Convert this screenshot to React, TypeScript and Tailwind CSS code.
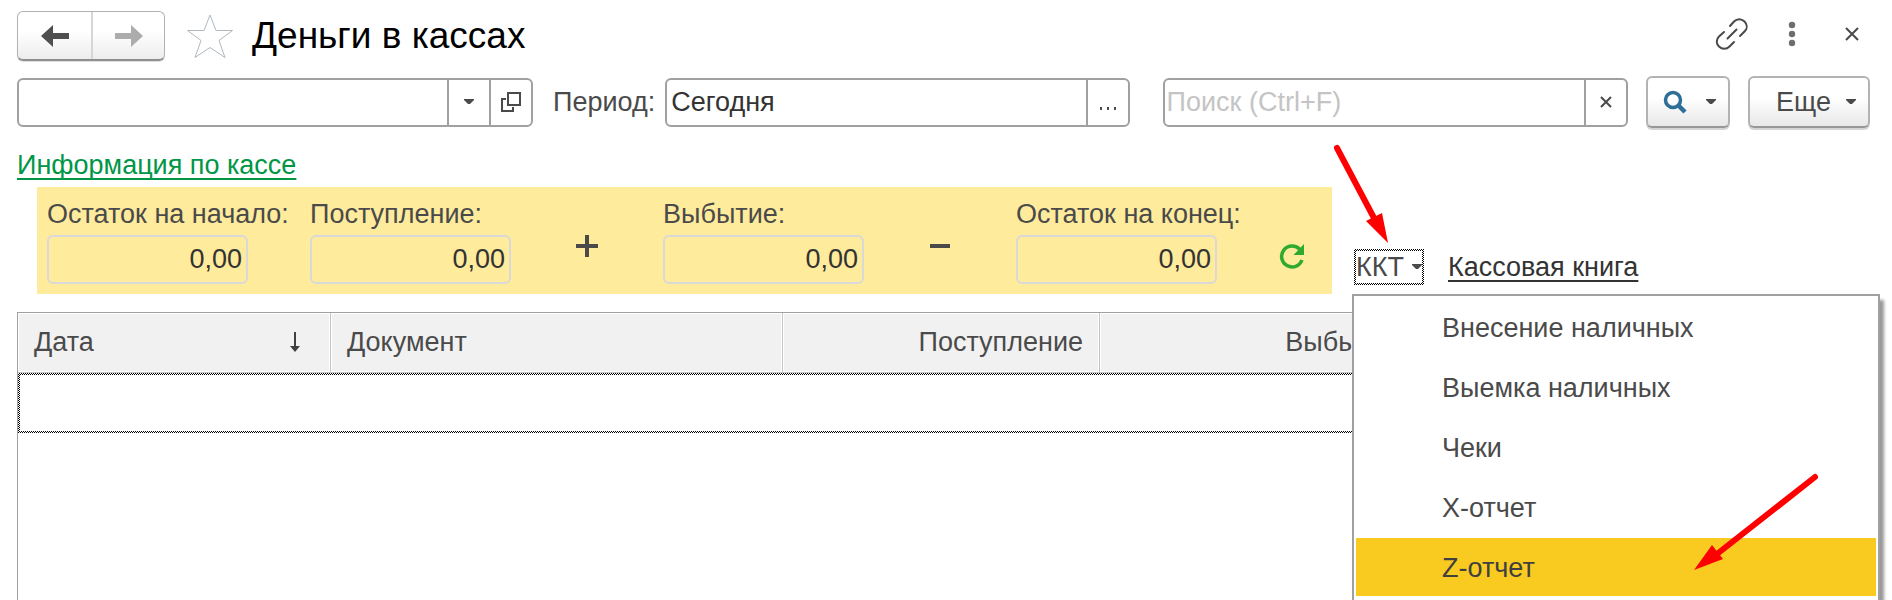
import type { ReactNode } from 'react'

const menuItems = ['Внесение наличных', 'Выемка наличных', 'Чеки', 'X-отчет', 'Z-отчет']
const activeItem = 'Z-отчет'

const checker = 'bg-[repeating-conic-gradient(#000_0_25%,#fff_0_50%)] bg-[length:2px_2px]'

function Caret() {
  return (
    <svg width="10" height="6" viewBox="0 0 10 6" className="shrink-0" fill="#4a4a4a">
      <path d="M0 0h10v1L6 5H4L0 1z" />
    </svg>
  )
}

function Cross() {
  return (
    <svg width="16" height="16" viewBox="0 0 16 16" stroke="#4a4a4a" strokeWidth="2">
      <path d="M2 2l12 12M14 2L2 14" />
    </svg>
  )
}

function Amount({ id, label }: { id: string; label: string }) {
  return (
    <div className="flex w-[201px] shrink-0 flex-col gap-[5px]">
      <label htmlFor={id} className="whitespace-nowrap">
        {label}
      </label>
      <input
        id={id}
        readOnly
        defaultValue="0,00"
        className="h-[49px] w-full rounded-md border-2 border-[#d9d9d9] bg-transparent px-1 text-right text-[#333]"
      />
    </div>
  )
}

function Sign({ children }: { children: ReactNode }) {
  return (
    <div className="flex w-[152px] justify-center pt-9">
      <svg width="24" height="24" viewBox="0 0 24 24" stroke="#4a4a4a" strokeWidth="4">
        {children}
      </svg>
    </div>
  )
}

function Header() {
  return (
    <header className="flex items-center">
      <div className="flex h-[50px] w-[148px] overflow-hidden rounded-md border border-b-2 border-[#b3b3b3] border-b-[#8f8f8f] bg-linear-to-b from-white from-40% to-[#ededed] shadow-[0_1px_1px_#ddd]">
        <button aria-label="Назад" className="flex w-[75px] items-center justify-center border-r-2 border-[#d6d6d6]">
          <svg width="28" height="24" viewBox="0 0 28 24" fill="#4f4f4f">
            <path d="M0 12L12 1v8h16v6H12v8z" />
          </svg>
        </button>
        <button aria-label="Вперед" className="flex flex-1 items-center justify-center">
          <svg width="28" height="24" viewBox="0 0 28 24" fill="#acacac">
            <path d="M28 12L16 1v8H0v6h16v8z" />
          </svg>
        </button>
      </div>
      <button aria-label="В избранное" className="ml-[21px]">
        <svg width="48" height="46" viewBox="0 0 48 46" fill="none" stroke="#b0b8c0" strokeWidth="1">
          <path d="M24 2l6 15.500h16.500L33 27.500l6 17L24 34.500 9 44.500l6-17L1.500 17.500H18z" />
        </svg>
      </button>
      <h1 className="ml-[18px] flex-1 text-[37px] leading-10 text-black">Деньги в кассах</h1>
      <div className="flex items-center pb-1 pr-2.5">
        <button aria-label="Получить ссылку" className="mr-[39px]">
          <svg width="34" height="34" viewBox="0 0 34 34" fill="none" stroke="#4a4a4a" strokeWidth="2" strokeLinecap="round">
            <path d="M15 9l4-4.500c3-3 7.500-3 10.500 0s3 7 0 10L25 19M19 25l-4.500 4.500c-3 3-7.500 3-10.500 0s-3-7 0-10L9 15M12.500 21.500l9-9" />
          </svg>
        </button>
        <button aria-label="Действия" className="mr-12">
          <svg width="8" height="26" viewBox="0 0 8 26" fill="#6e6e6e">
            <circle cx="4" cy="4" r="3.200" />
            <circle cx="4" cy="13" r="3.200" />
            <circle cx="4" cy="22" r="3.200" />
          </svg>
        </button>
        <button aria-label="Закрыть">
          <Cross />
        </button>
      </div>
    </header>
  )
}

const box = 'flex h-[49px] overflow-hidden rounded-md border-2 border-[#a0a0a0] bg-white'
const cell = 'flex shrink-0 items-center justify-center border-l-2 border-[#a0a0a0]'
const raised =
  'flex h-[52px] shrink-0 items-center rounded-md border-2 border-[#b3b3b3] border-b-[#979797] bg-linear-to-b from-white from-40% to-[#e8e8e8] shadow-[0_2px_0_#d4d4d4]'

function Toolbar() {
  return (
    <div className="flex items-center">
      <div className={`${box} flex-[516]`}>
        <input aria-label="Касса" className="min-w-0 flex-1 px-1 outline-none" />
        <button aria-label="Выбрать из списка" className={`${cell} w-[42px]`}>
          <Caret />
        </button>
        <button aria-label="Открыть" className={`${cell} w-[42px]`}>
          <svg width="20" height="20" viewBox="0 0 20 20" fill="none" stroke="#4a4a4a" strokeWidth="2">
            <path d="M7 1h12v12H7zM5 7H1v12h11v-4" />
          </svg>
        </button>
      </div>
      <label htmlFor="period" className="ml-5 mr-2.5">
        Период:
      </label>
      <div className={`${box} flex-[464]`}>
        <input id="period" defaultValue="Сегодня" className="min-w-0 flex-1 px-1 text-[#333] outline-none" />
        <button aria-label="Выбрать период" className={`${cell} w-[42px]`}>
          <svg width="16" height="3" viewBox="0 0 16 3" className="mt-3" fill="#4a4a4a">
            <path d="M0 0h2v3H0zM7 0h2v3H7zM14 0h2v3h-2z" />
          </svg>
        </button>
      </div>
      <div className={`${box} ml-[33px] flex-[465]`}>
        <input
          aria-label="Поиск"
          placeholder="Поиск (Ctrl+F)"
          className="min-w-0 flex-1 px-0.5 outline-none placeholder:text-[#c4c4c4]"
        />
        <button aria-label="Очистить" className={`${cell} w-[42px]`}>
          <svg width="12" height="12" viewBox="0 0 12 12" stroke="#4a4a4a" strokeWidth="2">
            <path d="M1 1l10 10M11 1L1 11" />
          </svg>
        </button>
      </div>
      <button aria-label="Найти" className={`${raised} ml-[18px] w-[84px] justify-between pl-[15px] pr-3`}>
        <svg width="24" height="24" viewBox="0 0 24 24" fill="none" stroke="#2d6e98">
          <circle cx="10" cy="10" r="7.500" strokeWidth="3.500" />
          <path d="M15 15l7 7" strokeWidth="4.500" />
        </svg>
        <Caret />
      </button>
      <button className={`${raised} ml-[18px] w-[122px] justify-between pl-[26px] pr-3`}>
        Еще
        <Caret />
      </button>
    </div>
  )
}

function CashMenu() {
  return (
    <div className="relative">
      <button aria-haspopup="menu" aria-expanded="true" className={`${checker} block p-0.5`}>
        <span className="flex h-8 w-[66px] items-center justify-between bg-white">
          ККТ
          <Caret />
        </span>
      </button>
      <div
        role="menu"
        className="absolute -left-0.5 top-[45px] z-10 flex w-[528px] flex-col gap-0.5 border-2 border-[#a0a0a0] bg-white p-0.5 pb-4 shadow-[4px_6px_3px_#999]"
      >
        {menuItems.map((item) => (
          <button
            key={item}
            role="menuitem"
            className={`h-[58px] w-full pl-[86px] pt-0.5 text-left ${item === activeItem ? 'bg-[#f9cb20] text-[#404040]' : ''}`}
          >
            {item}
          </button>
        ))}
      </div>
      {/* pointers to the menu button and the report item */}
      <svg width="60" height="102" viewBox="0 0 60 102" className="absolute -left-6 -top-[107px] z-20">
        <path d="M7 6L44 76" stroke="#f00" strokeWidth="6" strokeLinecap="round" />
        <path d="M58 101L36 79l16-8z" fill="#f00" />
      </svg>
      <svg width="130" height="102" viewBox="0 0 130 102" className="absolute left-[338px] top-[222px] z-20">
        <path d="M123 6L25 83" stroke="#f00" strokeWidth="6" strokeLinecap="round" />
        <path d="M2 99l18-25 11 14z" fill="#f00" />
      </svg>
    </div>
  )
}

function Summary() {
  return (
    <div className="flex items-end pl-5">
      <div className="flex h-[107px] w-[1295px] shrink-0 bg-[#ffeb9c] px-2.5 pt-[11px]">
        <Amount id="start" label="Остаток на начало:" />
        <div className="w-[62px]" />
        <Amount id="income" label="Поступление:" />
        <Sign>
          <path d="M12 1v22M1 12h22" />
        </Sign>
        <Amount id="outcome" label="Выбытие:" />
        <Sign>
          <path d="M2 12h20" />
        </Sign>
        <Amount id="end" label="Остаток на конец:" />
        <button aria-label="Обновить" className="ml-[62px] mt-[19px]">
          <svg width="26" height="26" viewBox="0 0 26 26" fill="none">
            <path d="M21 6.500A10.500 10.500 0 1 0 23 17" stroke="#2eaa2e" strokeWidth="3.500" />
            <path d="M25 1v11H14.500z" fill="#2eaa2e" />
          </svg>
        </button>
      </div>
      <div className="ml-[22px] flex items-center gap-6 pb-[9px]">
        <CashMenu />
        <a
          href="#book"
          className="whitespace-nowrap text-[#333] underline decoration-2 underline-offset-4 [text-decoration-skip-ink:none]"
        >
          Кассовая книга
        </a>
      </div>
    </div>
  )
}

const th = 'border-r border-b border-[#c4c4c4] p-0 font-normal'
const thInner = 'flex h-[59px] items-center border border-white bg-[#f1f1f1] px-[15px] pb-0.5'

function Documents() {
  return (
    <div className="mt-[18px] flex-1 border border-b-0 border-[#a0a0a0]">
      <table className="w-full table-fixed border-separate border-spacing-0">
        <thead>
          <tr>
            <th className={`${th} w-[313px]`}>
              <div className={`${thInner} justify-between`}>
                Дата
                <svg width="10" height="20" viewBox="0 0 10 20" className="mr-3.5" fill="#404040">
                  <path d="M4 0h2v14h4l-5 6-5-6h4z" />
                </svg>
              </div>
            </th>
            <th className={`${th} w-[452px]`}>
              <div className={thInner}>Документ</div>
            </th>
            <th className={`${th} w-[317px]`}>
              <div className={`${thInner} justify-end`}>Поступление</div>
            </th>
            <th className={`${th} w-[317px]`}>
              <div className={`${thInner} justify-end`}>Выбытие</div>
            </th>
            <th className={th}>
              <div className={thInner} />
            </th>
          </tr>
        </thead>
        <tbody>
          <tr>
            <td colSpan={5} className={`${checker} p-0.5`}>
              <div className="h-[56px] bg-white" />
            </td>
          </tr>
        </tbody>
      </table>
    </div>
  )
}

export default function App() {
  return (
    <main className="flex h-screen flex-col overflow-hidden bg-white pl-[17px] pr-[22px] pt-[11px] font-['Liberation_Sans',Arial,sans-serif] text-[27px] leading-8 text-[#4a4a4a]">
      <Header />
      <div className="mt-[15px]">
        <Toolbar />
      </div>
      <a
        href="#info"
        className="mb-[6px] mt-[21px] self-start text-[#009646] underline decoration-2 underline-offset-4 [text-decoration-skip-ink:none]"
      >
        Информация по кассе
      </a>
      <Summary />
      <Documents />
    </main>
  )
}
